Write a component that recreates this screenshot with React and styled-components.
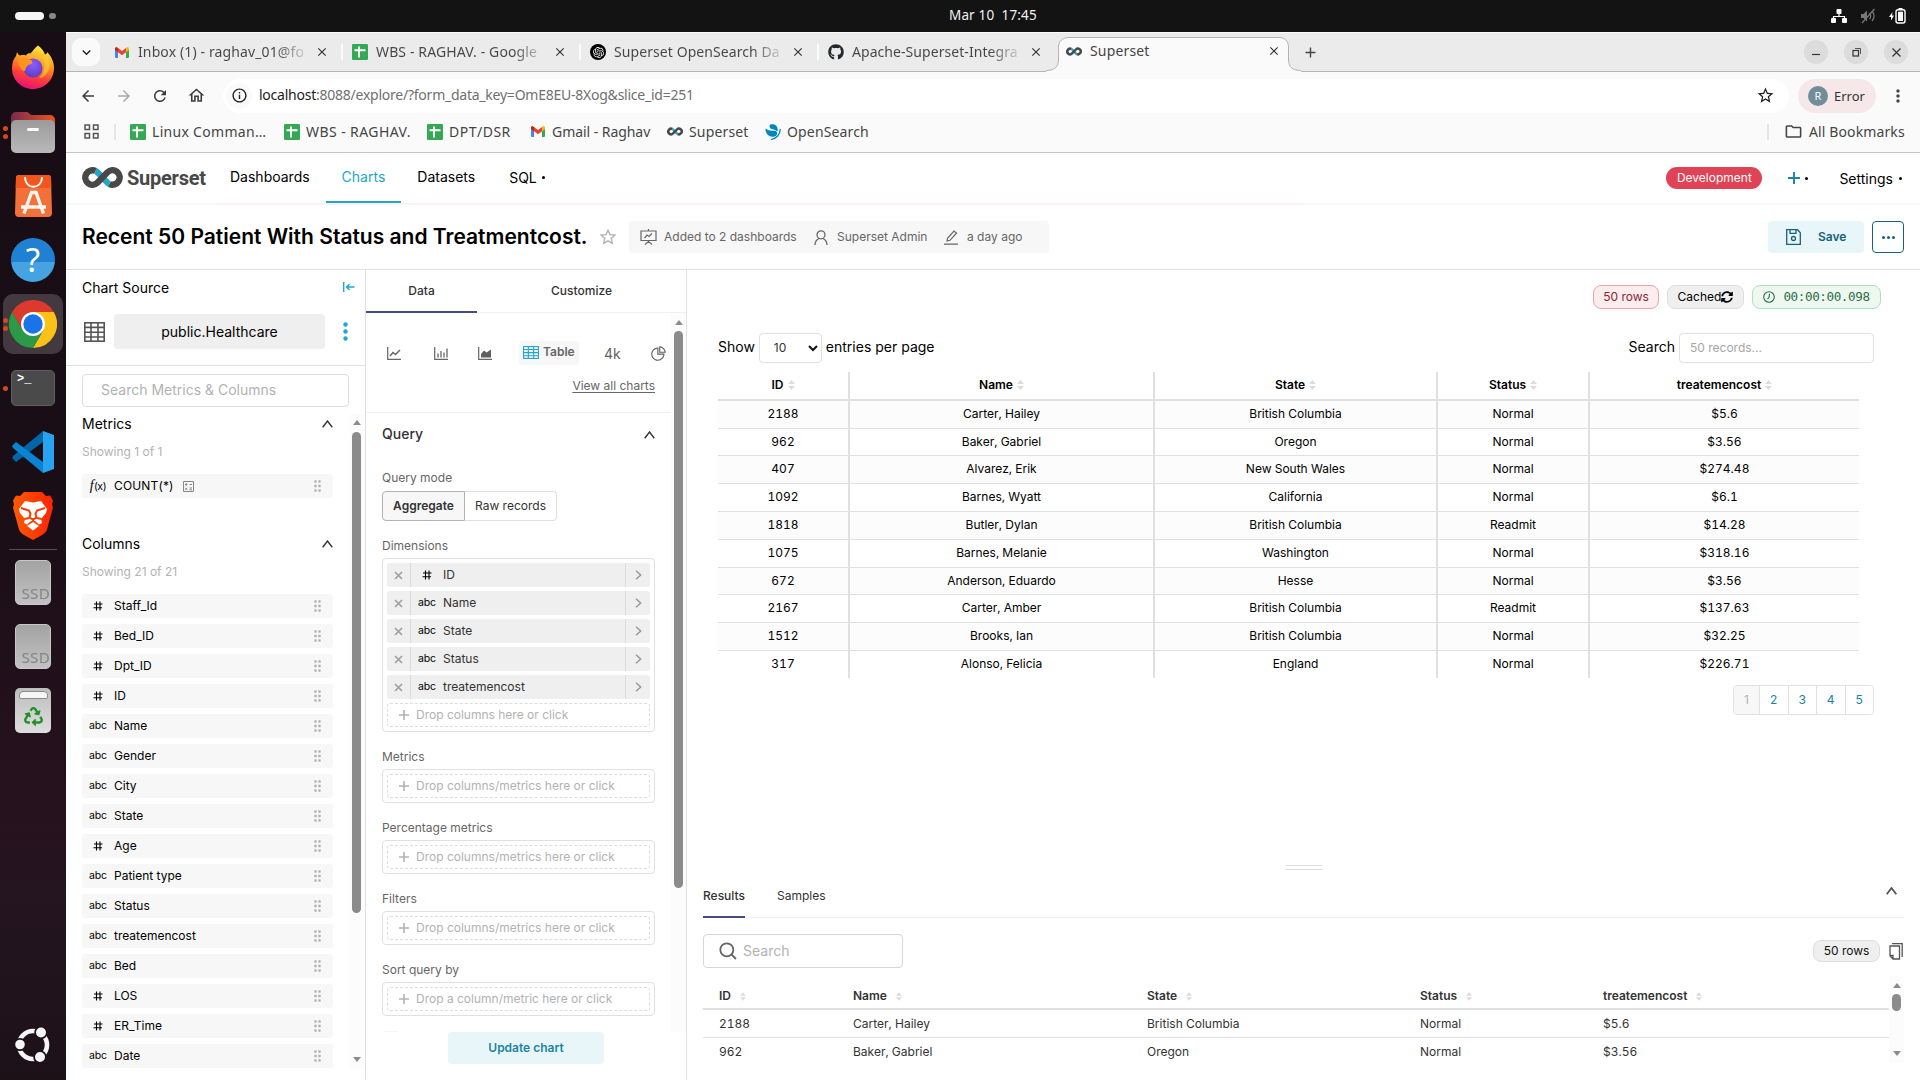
import React from 'react';
import styled, { createGlobalStyle, css } from 'styled-components';
import { AiOutlinePieChart } from 'react-icons/ai';
import { FaGithub, FaRecycle, FaSyncAlt } from 'react-icons/fa';
import { SiOpenai } from 'react-icons/si';
import {
  MdArrowBack, MdArrowForward, MdRefresh, MdOutlineHome, MdInfoOutline, MdStarOutline,
  MdMoreVert, MdOutlineFolder, MdClose, MdAdd, MdKeyboardArrowDown,
} from 'react-icons/md';

const inter = `Inter, 'Liberation Sans', sans-serif`;
const ubuntu = `'Noto Sans', 'Open Sans', sans-serif`;

const GlobalStyle = createGlobalStyle`
  * { box-sizing: border-box; }
  body { margin: 0; overflow: hidden; background: #fff; }
  svg { display: block; flex: none; }
`;

/* ---------- desktop shell ---------- */

const Desktop = styled.div`
  width: 1920px; height: 1080px; overflow: hidden;
  display: flex; flex-direction: column;
  font: 400 12px/16px ${inter}; color: #000;
`;
const TopBar = styled.header`
  height: 32px; background: #131313; color: #f2f2f2; flex: none;
  display: grid; grid-template-columns: 945px auto 1fr; align-items: center;
  padding: 0 14px 0 0; font: 400 14px/20px ${ubuntu};
`;
const Clock = styled.div`
  padding: 0 0 2px 4px; white-space: pre; font-size: 13.5px; letter-spacing: 0.15px;
`;
const Workspaces = styled.div`
  display: flex; align-items: center; gap: 5px; padding-left: 15px;
`;
const WorkspaceDot = styled.i`
  width: ${p => (p.$active ? 29 : 7)}px; height: ${p => (p.$active ? 8 : 6)}px;
  border-radius: 4px; background: ${p => (p.$active ? '#f5f5f5' : '#888')};
`;
const Tray = styled.div`
  display: flex; justify-content: flex-end; align-items: center; gap: 13px; height: 32px;
`;
const Body = styled.div`
  flex: 1; display: flex; min-height: 0;
`;
const Dock = styled.nav`
  width: 66px; flex: none; padding: 4px 0 3px; display: flex; flex-direction: column;
  background: linear-gradient(180deg, #180d14 0%, #1a0e16 45%, #27121f 76%, #241520 82%, #1d1118 100%);
`;
const DockSlot = styled.div`
  height: 64px; display: flex; align-items: center; justify-content: center; position: relative;
  padding-bottom: ${p => p.$lift || 0}px;
`;
const DockFocus = styled.div`
  width: 60px; height: 60px; border-radius: 10px; background: #43393f;
  display: flex; align-items: center; justify-content: center;
`;
const RunDots = styled.div`
  position: absolute; left: 3px; top: 0; height: 64px;
  display: flex; flex-direction: column; justify-content: center; gap: 3px;
`;
const RunDot = styled.i`
  width: 5px; height: 5px; border-radius: 50%; background: #d5481b;
`;
const DockRule = styled.div`
  height: 1px; margin: 1px 9px 0; background: #564e54;
`;
const Terminal = styled.div`
  width: 44px; height: 36px; border-radius: 5px; background: #4a4a4a; border: 1px solid #606060;
  color: #fff; font: 700 12px/15px 'Liberation Mono', monospace; padding: 1px 5px;
`;
const Drive = styled.div`
  width: 36px; height: 45px; border-radius: 5px; border: 1px solid #c9c9c9;
  background: linear-gradient(#a3a3a3, #c2c2c2); color: #858585;
  font: 400 15px/18px ${ubuntu}; display: flex; align-items: flex-end; justify-content: flex-end;
  padding-bottom: 2px; letter-spacing: 0.4px;
`;
const Bin = styled.div`
  width: 36px; height: 45px; border-radius: 5px; background: linear-gradient(#bdbdbd, #dedede);
  display: flex; flex-direction: column; align-items: center; padding-top: 3px; gap: 8px;
  color: #25902a;
`;
const BinLid = styled.div`
  width: 29px; height: 8px; border-radius: 4px 4px 2px 2px; background: #f6f6f6; border: 1px solid #8c8c8c;
`;
const Spacer = styled.div`flex: 1;`;

/* ---------- browser chrome ---------- */

const Browser = styled.main`
  flex: 1; min-width: 0; display: flex; flex-direction: column; background: #fff;
`;
const TabStrip = styled.div`
  height: 40px; flex: none; display: flex; align-items: center;
  background: #ebebeb; border-top: 1px solid #fbfbfb; box-shadow: inset 0 -1px 0 #b4b4b4;
  padding: 0 12px 1px 6px; font: 400 14px/20px ${ubuntu}; color: #454545;
`;
const TabSearch = styled.div`
  width: 28px; height: 28px; border-radius: 9px; background: #fafafa; margin-right: 14px; color: #222;
  display: flex; align-items: center; justify-content: center;
`;
const Tab = styled.div`
  width: 238px; height: 20px; display: flex; align-items: center; flex: none;
  ${p => !p.$last && css`&::after { content: ''; width: 2px; height: 16px; margin-left: 12px; background: #fafafa; }`}
`;
const Favicon = styled.span`
  width: 16px; height: 16px; display: flex; align-items: center; justify-content: center; flex: none;
`;
const RoundIcon = styled(Favicon)`
  border-radius: 50%; background: #000; color: #fff;
`;
const TabTitle = styled.span`
  width: 168px; margin-left: 8px; white-space: nowrap; letter-spacing: ${p => p.$ls || 0}px;
  ${p => p.$fade && css`
    color: transparent; background: linear-gradient(90deg, #454545 138px, #45454522 168px); background-clip: text;
  `}
`;
const TabClose = styled.span`
  margin-left: 9px; width: 14px; color: #333;
`;
const ActiveTab = styled.div`
  width: 256px; height: 36px; align-self: flex-end; margin: 0 0 -1px -20px; position: relative; flex: none;
  display: flex; align-items: center; padding-left: 20px; padding-bottom: 6px;
`;
const ActiveShape = styled.svg`
  position: absolute; left: 0; top: 1px; overflow: visible;
`;
const ActiveContent = styled.div`
  position: relative; display: flex; align-items: center;
`;
const WinButton = styled.div`
  width: 24px; height: 24px; border-radius: 50%; background: #dcdcdc; margin-left: 16px; color: #333;
  display: flex; align-items: center; justify-content: center;
`;
const Toolbar = styled.div`
  height: 47px; flex: none; background: #fafafa; display: flex; align-items: center;
  padding: 0 12px 0 13px; color: #454545; font: 400 14px/20px ${ubuntu};
`;
const NavIcon = styled.span`
  width: 20px; margin-right: 16px; color: ${p => (p.$off ? '#a9a9a9' : '#3c3c3c')};
`;
const UrlBar = styled.div`
  height: 34px; width: 1566px; border-radius: 17px; background: #fff; flex: none;
  display: flex; align-items: center; padding: 0 14px 0 3px; color: #222;
`;
const SiteInfo = styled.span`
  width: 26px; height: 26px; border-radius: 50%; background: #fafafa; margin-right: 7px;
  display: flex; align-items: center; justify-content: center;
`;
const UrlText = styled.span`
  flex: 1; color: #707070; letter-spacing: -0.24px; padding-bottom: 2px; b { font-weight: 400; color: #1c1c1c; }
`;
const ProfilePill = styled.div`
  width: 78px; height: 34px; margin-left: 9px; border-radius: 17px; background: #f6e8e8; flex: none;
  display: flex; align-items: center; padding-left: 10px; gap: 6px; font-size: 13px; color: #333;
`;
const Avatar = styled.span`
  width: 20px; height: 20px; border-radius: 50%; background: #728c99; color: #fff;
  font-size: 11px; line-height: 20px; text-align: center;
`;
const Bookmarks = styled.div`
  height: 34px; flex: none; background: #fafafa; border-bottom: 1px solid #c6c6c6;
  display: flex; align-items: center; padding: 0 15px 8px 18px; color: #454545;
  font: 400 14px/20px ${ubuntu};
`;
const BarRule = styled.i`
  width: 2px; height: 16px; background: #e6e6e6; margin: 0 ${p => p.$r}px 0 ${p => p.$l}px;
`;
const Bookmark = styled.span`
  width: ${p => p.$w}px; display: flex; align-items: center; gap: 6px; white-space: nowrap; flex: none;
  letter-spacing: ${p => p.$ls || 0}px;
`;

/* ---------- application header ---------- */

const AppNav = styled.div`
  height: 52px; flex: none; display: flex; align-items: stretch; padding: 0 18px 0 16px;
  border-bottom: 2px solid #f7f7f7; font-size: 14px; background: #fff;
  border-image: linear-gradient(90deg, #f7f7f7 148px, #fdf3f5 148px, #fdf3f5 1236px, #f7f7f7 1236px) 0 0 2 0;
`;
const Brand = styled.div`
  display: flex; align-items: center; width: 132px; gap: 4px; color: #484848; padding-bottom: 1px;
  font: 700 20px/24px Roboto, sans-serif; letter-spacing: -0.25px;
`;
const NavItem = styled.div`
  padding: 0 16px 2px; display: flex; align-items: center; height: 50px;
  color: ${p => (p.$active ? '#20a7c9' : '#000')};
  box-shadow: ${p => (p.$active ? 'inset 0 -2px 0 #20a7c9' : 'none')};
`;
const NavMenu = styled.div`
  display: flex; align-items: center; height: 51px; margin-left: ${p => p.$ml}px; padding-bottom: ${p => p.$pb || 0}px;
`;
const NavDot = styled.i`
  width: 3px; height: 3px; border-radius: 50%; background: #000; margin-left: ${p => p.$ml}px;
`;
const EnvTag = styled.div`
  width: 96px; height: 22px; border-radius: 11px; background: #e04355; color: #fff; align-self: center;
  font-size: 12px; line-height: 22px; text-align: center;
`;
const TitleBar = styled.div`
  height: 65px; flex: none; display: flex; align-items: center; padding: 0 16px;
  border-bottom: 1px solid #e0e0e0;
`;
const Title = styled.h1`
  margin: 0; width: 518px; font: 600 21px/28px ${inter}; white-space: nowrap;
`;
const Meta = styled.div`
  width: 420px; height: 32px; margin-left: 13px; background: #f7f7f7; border-radius: 4px; color: #666;
  display: flex; align-items: center; padding-left: 11px;
`;
const MetaItem = styled.span`
  display: flex; align-items: center; gap: ${p => p.$gap}px; width: ${p => p.$w}px; white-space: nowrap; flex: none;
`;
const SaveButton = styled.div`
  width: 96px; height: 32px; border-radius: 4px; background: #e9f6f9; color: #156378; font-weight: 600;
  display: flex; align-items: center; padding-left: 18px; gap: 17px; margin-right: 8px;
`;
const MoreButton = styled.div`
  width: 32px; height: 32px; border-radius: 4px; border: 1px solid #156378;
  display: flex; align-items: center; justify-content: center; gap: 2px;
  i { width: 3px; height: 3px; border-radius: 50%; background: #156378; }
`;
const Explore = styled.div`
  flex: 1; display: flex; min-height: 0;
`;

/* ---------- datasource panel ---------- */

const SourcePanel = styled.section`
  width: 300px; flex: none; border-right: 1px solid #e0e0e0; display: flex; flex-direction: column;
`;
const SourceTop = styled.div`
  height: 96px; flex: none; border-bottom: 1px solid #e0e0e0; padding: 8px 10px 0 16px;
`;
const SourceHead = styled.div`
  height: 20px; display: flex; align-items: center; justify-content: space-between; font-size: 14px; line-height: 20px;
  svg { margin-bottom: 2px; }
`;
const SourceRow = styled.div`
  margin-top: 16px; height: 35px; display: flex; align-items: center; padding-left: 2px;
`;
const SourceName = styled.div`
  width: 211px; height: 35px; margin: 0 18px 0 9px; border-radius: 4px; background: #efefef;
  font-size: 14px; line-height: 35px; text-align: center;
`;
const MetricSearch = styled.div`
  width: 267px; height: 33px; margin: 8px 0 0 16px; border: 1px solid #dedede; border-radius: 4px; flex: none;
  font-size: 14px; line-height: 30px; padding-left: 18px; color: #b2b2b2;
`;
const SourceScroll = styled.div`
  flex: 1; display: flex; min-height: 0; padding: 7px 0 11px 16px; justify-content: space-between;
`;
const FieldList = styled.div`
  width: 251px; display: flex; flex-direction: column; gap: 6px; overflow: hidden;
`;
const GroupHead = styled.div`
  height: 20px; display: flex; justify-content: space-between; align-items: center; flex: none;
  font-size: 14px; margin-top: ${p => p.$mt || 0}px;
`;
const Showing = styled.div`
  height: 16px; margin: 4px 0 8px; color: #b2b2b2; flex: none;
`;
const Field = styled.div`
  height: 24px; flex: none; background: #f7f7f7; border-radius: 3px; display: flex; align-items: center;
  padding: 0 12px 0 6px;
`;
const TypeIcon = styled.span`
  width: ${p => p.$w || 20}px; display: flex; justify-content: center; margin-right: ${p => (p.$chip ? 0 : 6)}px;
  font-size: 10.5px; color: #000; letter-spacing: -0.15px;
`;
const Fx = styled.i`
  font: italic 400 14px/16px 'Liberation Serif', serif; letter-spacing: 0.2px;
  small { font: 400 10.5px ${inter}; letter-spacing: -0.4px; }
`;
const FieldName = styled.span`
  flex: ${p => (p.$tight ? 'none' : 1)}; margin-right: 9px; white-space: nowrap; letter-spacing: ${p => (p.$tight ? 0.15 : 0)}px;
`;
const Track = styled.div`
  width: 15px; background: #fcfcfc; flex: none; display: flex; flex-direction: column; align-items: center;
  padding: ${p => p.$pad};
`;
const Arrow = styled.i`
  border: 4.5px solid transparent; border-top-width: 0; border-bottom: 5px solid #8b8b8b;
  ${p => p.$down && css`transform: rotate(180deg);`}
`;
const Thumb = styled.div`
  width: 9px; border-radius: 5px; background: #8b8b8b; height: ${p => p.$h}px; margin-top: ${p => p.$mt}px; flex: none;
`;

/* ---------- control panel ---------- */

const ControlPanel = styled.section`
  width: 321px; flex: none; border-right: 1px solid #e0e0e0; display: flex; flex-direction: column;
`;
const Tabs = styled.div`
  display: flex; height: 43px; flex: none; border-bottom: 1px solid #f0f0f0;
`;
const ControlTab = styled.div`
  width: ${p => p.$w}px; height: 43px; line-height: 41px; text-align: center; color: #333; font-weight: 500;
  border-bottom: 2px solid ${p => (p.$active ? '#444e7c' : 'transparent')};
`;
const ControlScroll = styled.div`
  flex: 1; display: flex; min-height: 0;
`;
const Controls = styled.div`
  width: 305px; display: flex; flex-direction: column;
`;
const VizRow = styled.div`
  height: 79px; margin-top: 20px; flex: none; padding-top: 8px;
`;
const VizTypes = styled.div`
  display: flex; align-items: center; height: 24px; color: #5f5f5f; padding-left: 21px;
`;
const Viz = styled.span`
  width: ${p => p.$w}px; font-size: 14px; padding-top: ${p => (p.$text ? 1 : 0)}px;
`;
const VizPill = styled.span`
  width: 60px; height: 24px; background: #f7f7f7; border-radius: 4px; font-weight: 600; color: #666; margin-right: 25px;
  display: flex; align-items: center; gap: 4px; padding-left: 4px; padding-bottom: 2px;
`;
const ViewAll = styled.div`
  margin: 13px 16px 0 auto; width: 83px; text-align: right; color: #666; text-decoration: underline; white-space: nowrap; text-underline-offset: 2px;
`;
const Section = styled.div`
  border-top: 1px solid #f0f0f0; padding: 10px 15px 0 16px; flex: none;
`;
const SectionHead = styled.div`
  height: 22px; display: flex; align-items: center; justify-content: space-between; font-size: 14px; font-weight: 500; color: #333;
  padding-right: 1px;
  svg { margin-top: 2px; }
`;
const Label = styled.div`
  color: #666; height: 16px; margin: ${p => p.$mt}px 0 4px;
`;
const ModeButtons = styled.div`display: flex; height: 30px; margin-top: 5px;`;
const Mode = styled.div`
  width: ${p => (p.$on ? 83 : 92)}px; line-height: 27px; text-align: center; border: 1px solid ${p => (p.$on ? '#b2b2b2' : '#e0e0e0')};
  border-radius: ${p => (p.$on ? '4px 0 0 4px' : '0 4px 4px 0')}; color: #333;
  background: ${p => (p.$on ? '#f7f7f7' : '#fff')}; font-weight: ${p => (p.$on ? 600 : 400)};
  border-left-width: ${p => (p.$on ? 1 : 0)}px;
`;
const DropBox = styled.div`
  width: 273px; border: 1px solid #e0e0e0; border-radius: 4px; padding: 4px; display: flex; flex-direction: column; gap: 4px;
`;
const Chip = styled.div`
  height: 24px; background: #efefef; border-radius: 3px; display: flex; align-items: center; color: #333;
`;
const ChipEdge = styled.span`
  width: ${p => (p.$right ? 25 : 24)}px; height: 24px; display: flex; align-items: center; justify-content: center; color: #a8a8a8;
  border-${p => (p.$right ? 'left' : 'right')}: 1px solid #dcdcdc;
`;
const DropHint = styled.div`
  height: 24px; border: 1px dashed #dcdcdc; border-radius: 3px; color: #b2b2b2; display: flex; align-items: center;
  padding: 0 0 1px 11px; gap: 7px;
`;
const UpdateFooter = styled.div`
  height: 48px; flex: none; display: flex; align-items: flex-start; padding-left: 82px;
`;
const UpdateButton = styled.div`
  width: 156px; height: 32px; border-radius: 4px; background: #e9f6f9; color: #1a85a0; font-weight: 600;
  line-height: 31px; text-align: center;
`;
const FadedRow = styled.div`
  margin: 15px 0 0 16px; display: flex; height: 5px; overflow: hidden;
  i { width: 17px; height: 17px; border: 1px solid #f5f5f5; border-radius: 2px; }
`;

/* ---------- chart panel ---------- */

const ChartPanel = styled.section`
  flex: 1; min-width: 0; display: flex; flex-direction: column;
`;
const Pills = styled.div`
  display: flex; justify-content: flex-end; gap: 8px; padding: 15px 39px 0 0;
`;
const Pill = styled.div`
  width: ${p => p.$w}px; height: ${p => p.$h || 24}px; border: 1px solid ${p => p.$bd}; background: ${p => p.$bg}; color: ${p => p.$fg};
  border-radius: 8px; display: flex; align-items: center; justify-content: center; gap: ${p => p.$gap || 0}px; white-space: nowrap;
`;
const Mono = styled.span`font: 400 12.6px/16px 'DejaVu Sans Mono', monospace; letter-spacing: -0.4px;`;
const Filters = styled.div`
  display: flex; align-items: center; height: 30px; margin: 24px 46px 9px 31px; font-size: 14px; flex: none;
`;
const FilterText = styled.span`padding-bottom: 2px;`;
const PageSize = styled.div`
  width: 63px; height: 30px; border: 1px solid #e0e0e0; border-radius: 4px; margin: 0 4px 0 4px; padding: 0 3px 0 14px;
  display: flex; align-items: center; justify-content: space-between; font-size: 12px; color: #333;
`;
const RecordSearch = styled.div`
  width: 195px; height: 30px; border: 1px solid #e0e0e0; border-radius: 4px; margin-left: 4px; padding-left: 10px;
  font-size: 12px; line-height: 28px; color: #a6a6a6;
`;
const DataTable = styled.div`
  width: 1141px; margin-left: 31px; flex: none; font-variant-numeric: tabular-nums;
`;
const columns = '132px 305px 283px 152px 269px';
const HeadRow = styled.div`
  display: grid; grid-template-columns: ${columns}; height: 29px; border-bottom: 2px solid #e0e0e0; font-weight: 600;
`;
const DataRow = styled.div`
  display: grid; grid-template-columns: ${columns}; height: ${p => p.$h}px;
  background: ${p => (p.$odd ? '#fcfcfc' : '#fff')};
`;
const Cell = styled.div`
  display: flex; align-items: center; justify-content: center; gap: 4px; padding-bottom: 1px;
  &:not(:last-child) { border-right: 2px solid #e0e0e0; }
  ${p => !p.$head && !p.$end && css`border-bottom: 1px solid #e0e0e0;`}
`;
const Pager = styled.div`
  display: flex; width: 141px; height: 30px; margin: 7px 46px 0 auto; border: 1px solid #e0e0e0; border-radius: 4px; overflow: hidden; flex: none;
`;
const Page = styled.span`
  flex: ${p => (p.$on ? '0 0 25px' : 1)}; text-align: center; line-height: 28px; color: ${p => (p.$on ? '#b2b2b2' : '#1a85a0')};
  background: ${p => (p.$on ? '#f7f7f7' : '#fff')}; & + & { border-left: 1px solid #e0e0e0; }
`;
const Gutter = styled.div`
  width: 36px; height: 5px; margin: 150px 0 0 599px; border-top: 1px solid #dcdcdc; border-bottom: 1px solid #dcdcdc; flex: none;
`;
const ResultTabs = styled.div`
  display: flex; gap: 32px; margin: 12px 16px 0; height: 36px; border-bottom: 1px solid #f0f0f0; flex: none; color: #333;
`;
const ResultTab = styled.div`
  width: ${p => p.$w}px; height: 36px; line-height: 28px; white-space: nowrap; font-weight: ${p => (p.$on ? 500 : 400)};
  border-bottom: 2px solid ${p => (p.$on ? '#444e7c' : 'transparent')};
`;
const TabsCaret = styled.div`margin: 0 7px 0 auto; padding-top: 5px; color: #555;`;
const ResultBar = styled.div`
  display: flex; align-items: center; margin: 16px 16px 8px; height: 34px; flex: none;
`;
const ResultSearch = styled.div`
  width: 200px; height: 34px; border: 1px solid #d6d6de; border-radius: 4px; padding-left: 15px; display: flex; align-items: center; gap: 6px;
  color: #b2b2b2; font-size: 14px;
`;
const CopyIcon = styled.svg`margin: 0 1px 0 9px;`;
const ResultGrid = styled.div`
  display: flex; margin: 0 16px; height: 87px; flex: none;
`;
const ResultRows = styled.div`flex: 1; color: #333; overflow: hidden; font-variant-numeric: tabular-nums;`;
const ResultRow = styled.div`
  display: grid; grid-template-columns: 134px 294px 273px 183px 1fr; align-items: center; padding-left: 16px;
  height: ${p => (p.$head ? 34 : 28)}px; border-bottom: ${p => (p.$head ? 2 : 1)}px solid ${p => (p.$last ? 'transparent' : '#e0e0e0')};
  padding-top: ${p => (p.$head ? 8 : 1)}px;
  font-weight: ${p => (p.$head ? 600 : 400)};
  span { display: flex; align-items: center; gap: 9px; }
`;

/* ---------- drawings ---------- */

const Loop = ({ w = 16, h = 8 }) => (
  <svg width={w} height={h} viewBox="0 0 41 21" fill="none" strokeWidth="6.400">
    <path d="M13.500 3.950C17 5.200 24 15.800 27.500 17.050" stroke="#20a7c9" />
    <path d="M13.500 3.950A7.200 7.200 0 1 0 15.600 15.600L25.400 5.400A7.200 7.200 0 1 1 27.500 17.050" stroke="#484848" />
  </svg>
);
const Gmail = () => (
  <svg width="14" height="11" viewBox="0 0 14 11">
    <path d="M0 1.500V10a1 1 0 0 0 1 1h2V4z" fill="#4285f4" />
    <path d="M14 1.500V10a1 1 0 0 1-1 1h-2V4z" fill="#34a853" />
    <path d="M3 1v4.300L0 3V1.300A1.300 1.300 0 0 1 2.200.400z" fill="#c5221f" />
    <path d="M3 1l4 3 4-3v4.300L7 8.300 3 5.300z" fill="#ea4335" />
    <path d="M11 1v4.300L14 3V1.300a1.300 1.300 0 0 0-2.200-.9z" fill="#fbbc04" />
  </svg>
);
const Sheet = () => (
  <svg width="16" height="16" viewBox="0 0 16 16">
    <rect width="16" height="16" rx="1.200" fill="#34a853" />
    <path d="M7 2.500v11M2.500 6.200h11" stroke="#fff" strokeWidth="2" />
  </svg>
);
const OpenSearch = () => (
  <svg width="16" height="16" viewBox="0 0 16 16">
    <path d="M15.200 5.500A10 10 0 0 1 6.500 15.300" stroke="#0087bd" strokeWidth="1.300" fill="none" strokeLinecap="round" />
    <path d="M.8 4.200C-.2 8 2.500 12.500 7.500 12.800c3.800.2 5.300-2.300 4.300-4.600C10.700 5.800 8 7 5.300 6.400 3.500 6 1.800 5.600.8 4.200z" fill="#0087bd" />
    <path d="M5.200.5C8-.5 12.200.8 12.700 4.700c.2 2-.7 3.100-1.500 2.100C9.900 5.100 8 5.600 6.500 4.900 4.500 3.900 4 1.300 5.200.5z" fill="#0087bd" />
  </svg>
);
const GridIcon = ({ w, h, color, sw = 1.5 }) => (
  <svg width={w} height={h} viewBox={`0 0 ${w} ${h}`} fill="none" stroke={color} strokeWidth={sw}>
    <rect x={sw / 2} y={sw / 2} width={w - sw} height={h - sw} />
    <path d={`M0 ${h * 0.27}H${w}M0 ${h * 0.51}H${w}M0 ${h * 0.75}H${w}M${w / 3} 0V${h}M${w * 2 / 3} 0V${h}`} strokeWidth={sw} />
  </svg>
);
const Axes = ({ children }) => (
  <svg width="14" height="13" viewBox="0 0 14 13" fill="none" stroke="#666" strokeWidth="1.200">
    <path d="M.7 0v12.300H14" />{children}
  </svg>
);
const Caret = ({ w = 11, h = 8, color = '#333', sw = 1.4 }) => (
  <svg width={w} height={h} viewBox="0 0 11 8" fill="none" stroke={color} strokeWidth={sw}><path d="M.7 7.200L5.500 1l4.800 6.200" /></svg>
);
const Grip = () => (
  <svg width="7" height="12" viewBox="0 0 7 12" fill="#b2b2b2">
    {[1.5, 6, 10.500].map(y => [1.5, 5.500].map(x => <rect key={`${x}${y}`} x={x - 1.200} y={y - 1.200} width="2.400" height="2.400" rx=".6" />))}
  </svg>
);
const Hash = () => (
  <svg width="10" height="10" viewBox="0 0 10 10" stroke="#000" strokeWidth="1.100"><path d="M3.500.5v9M7 .5v9M1 3h8.500M.5 6.700H9" /></svg>
);
const Sort = ({ w = 7, h = 10 }) => (
  <svg width={w} height={h} viewBox="0 0 7 10" fill="#dcdcdc"><path d="M3.500 0L7 4H0zM3.500 10L0 6h7z" /></svg>
);
const Plus = ({ size = 10, color = '#b2b2b2' }) => (
  <svg width={size} height={size} viewBox="0 0 10 10" stroke={color} strokeWidth="1.600"><path d="M5 0v10M0 5h10" /></svg>
);

const Firefox = () => (
  <svg width="44" height="44" viewBox="0 0 44 44">
    <defs>
      <linearGradient id="fa" x1=".7" y1="0" x2=".4" y2="1"><stop offset="0" stopColor="#fff04a" /><stop offset=".4" stopColor="#ff9a1f" /><stop offset=".7" stopColor="#ff4038" /><stop offset="1" stopColor="#e6107c" /></linearGradient>
      <radialGradient id="fb" cx=".5" cy=".3" r=".7"><stop offset="0" stopColor="#9059ff" /><stop offset="1" stopColor="#5a3fc4" /></radialGradient>
    </defs>
    <path d="M27 .5c4 3 6 6 7 9 2-.5 2-1.500 2-2.500 4 4 7 9.500 7 16C43 35 33.500 44 22 44S1 35 1 23c0-5 1.500-9 4-12l1-4c1 2 1.500 3 3 3.500 2-.5 4-.6 6 0 2-3 4.500-2 4.500-2C22 6 24 2.500 27 .5z" fill="url(#fa)" />
    <circle cx="22" cy="23" r="9.500" fill="url(#fb)" />
    <path d="M7 15c3-2.500 7-2.500 11-1 3 1 4 3 3 4.500-1 1-4 1-5 2.500-2 2.500-1 5-3 5S6 19 7 15z" fill="#ff9320" />
    <path d="M35 10c4 5 5 13 1 18-2 3-5 5-8 5 6-6 7-14 3-20z" fill="#ffc93a" opacity=".7" />
  </svg>
);
const Files = () => (
  <svg width="44" height="41" viewBox="0 0 44 41">
    <defs><linearGradient id="fl"><stop offset="0" stopColor="#7b2a50" /><stop offset="1" stopColor="#e9541f" /></linearGradient>
      <linearGradient id="fg" x2="0" y2="1"><stop offset="0" stopColor="#9b9b9b" /><stop offset="1" stopColor="#b9b9b9" /></linearGradient></defs>
    <path d="M0 5a5 5 0 0 1 5-5h11c2 0 2.500 3 5 3h18a5 5 0 0 1 5 5v12H0z" fill="url(#fl)" />
    <rect y="8" width="44" height="33" rx="5" fill="url(#fg)" /><rect x="16" y="16" width="12" height="3" rx="1.500" fill="#fff" />
  </svg>
);
const Store = () => (
  <svg width="37" height="42" viewBox="0 0 37 42">
    <path d="M4 0h29a3 3 0 0 1 3 3l1 35a4 4 0 0 1-4 4H4a4 4 0 0 1-4-4L1 3a3 3 0 0 1 3-3z" fill="#f4703a" />
    <path d="M4 0h29a3 3 0 0 1 3 3l.3 10H.7L1 3a3 3 0 0 1 3-3z" fill="#f2561d" />
    <path d="M10 2c0 13 17 13 17 0" fill="none" stroke="#fff" strokeWidth="1.800" />
    <path d="M9 38.500l7.500-21h4.500l7.500 21M6 32h25" fill="none" stroke="#fff5ee" strokeWidth="3.400" />
  </svg>
);
const HelpBall = styled.div`
  width: 44px; height: 44px; border-radius: 50%; background: linear-gradient(#2080d2 0 54%, #46a3e2 55%); color: #fff;
  font: 400 33px/44px ${ubuntu}; text-align: center;
`;
const Chrome = () => (
  <svg width="48" height="48" viewBox="0 0 48 48">
    <path d="M24 24L3.200 12A24 24 0 0 1 44.800 12z" fill="#dd3a2e" />
    <path d="M24 12h20.800A24 24 0 0 1 24 48l10.400-18z" fill="#fbc116" />
    <path d="M13.600 30L3.200 12A24 24 0 0 0 24 48l10.400-18z" fill="#2a9a48" />
    <path d="M24 12H3.200L13.600 30z" fill="#dd3a2e" />
    <circle cx="24" cy="24" r="12" fill="#fff" /><circle cx="24" cy="24" r="9.700" fill="#1a73e8" />
  </svg>
);
const Code = () => (
  <svg width="42" height="42" viewBox="0 0 42 42">
    <path d="M0 27l4 4L31 11V0L1 25z" fill="#0065a9" />
    <path d="M0 15l4-4 27 20v11L1 17z" fill="#0a84d0" />
    <path d="M31 0l11 4v34l-11 4z" fill="#27a3f2" />
  </svg>
);
const Lion = () => (
  <svg width="42" height="48" viewBox="0 0 42 48">
    <defs><linearGradient id="br"><stop offset="0" stopColor="#ff5a00" /><stop offset="1" stopColor="#fb2400" /></linearGradient></defs>
    <path d="M12 0h18l4 4 4-.5 3 5-1 4 1 3-6 22c-1 3-3 4-5 5.500L21 48l-9-5C10 41.500 8 40.500 7 37.500L1 15.500l1-3-1-4 3-5 4 .5z" fill="url(#br)" />
    <path d="M13 9l8 1.500L29 9l6 8-1 4-5 6 1 4-3 1.500-4-3.500h-4l-4 3.500L12 31l1-4-5-6-1-4z" fill="#fff" />
    <path d="M9 16l8 2.500 1.500 3-1 4 3.500 2 3.500-2-1-4 1.500-3L33 16M12.500 27l4.500-1M29.500 27l-4.500-1M21 27.500V31" stroke="#fb3a00" strokeWidth="2" fill="none" />
    <path d="M15 34l6-4 6 4-6 4.500z" fill="#fff" />
  </svg>
);
const UbuntuMark = () => (
  <svg width="36" height="36" viewBox="0 0 36 36" fill="none">
    <circle cx="18" cy="18" r="14" stroke="#f5f5f5" strokeWidth="4.600" />
    <g fill="#f5f5f5" stroke="#1e1219" strokeWidth="1.800"><circle cx="5" cy="17.500" r="5.700" /><circle cx="26" cy="5.500" r="5.900" /><circle cx="25" cy="30" r="5.900" /></g>
  </svg>
);
const Network = () => (
  <svg width="16" height="14" viewBox="0 0 16 14" fill="#fff"><rect x="5.500" width="5" height="5" rx="1" /><rect y="9" width="5" height="5" rx="1" /><rect x="11" y="9" width="5" height="5" rx="1" /><path d="M8 4v4M2.500 10V7.500h11V10" stroke="#fff" fill="none" strokeWidth="1.200" /></svg>
);
const Muted = () => (
  <svg width="16" height="16" viewBox="0 0 16 16" fill="#777" stroke="#777"><path d="M1 6h2.500L7 2.500v11L3.500 10H1z" stroke="none" /><path d="M9.500 5c1.500 1.500 1.500 4.500 0 6M12 3c2.500 3 2.500 7 0 10" fill="none" strokeWidth="1.200" /><path d="M2 15L14.500 1" strokeWidth="1.300" /></svg>
);
const Battery = () => (
  <svg width="17" height="16" viewBox="0 0 17 16"><path d="M3.500 4L0 9h2v3.500L5 7.500H3z" fill="#fff" /><rect x="7" y="1.700" width="9" height="13.300" rx="2" fill="none" stroke="#fff" strokeWidth="1.400" /><rect x="9" y="3.700" width="5" height="9.300" fill="#fff" /><rect x="9.500" y="0" width="4" height="2" fill="#fff" /></svg>
);

/* ---------- data ---------- */

const rows = [
  ['2188', 'Carter, Hailey', 'British Columbia', 'Normal', '$5.6'],
  ['962', 'Baker, Gabriel', 'Oregon', 'Normal', '$3.56'],
  ['407', 'Alvarez, Erik', 'New South Wales', 'Normal', '$274.48'],
  ['1092', 'Barnes, Wyatt', 'California', 'Normal', '$6.1'],
  ['1818', 'Butler, Dylan', 'British Columbia', 'Readmit', '$14.28'],
  ['1075', 'Barnes, Melanie', 'Washington', 'Normal', '$318.16'],
  ['672', 'Anderson, Eduardo', 'Hesse', 'Normal', '$3.56'],
  ['2167', 'Carter, Amber', 'British Columbia', 'Readmit', '$137.63'],
  ['1512', 'Brooks, Ian', 'British Columbia', 'Normal', '$32.25'],
  ['317', 'Alonso, Felicia', 'England', 'Normal', '$226.71'],
];
const rowHeights = [28, 27, 28, 28, 28, 28, 27, 28, 28, 27];
const heads = ['ID', 'Name', 'State', 'Status', 'treatemencost'];
const fields = [
  ['#', 'Staff_Id'], ['#', 'Bed_ID'], ['#', 'Dpt_ID'], ['#', 'ID'], ['abc', 'Name'], ['abc', 'Gender'],
  ['abc', 'City'], ['abc', 'State'], ['#', 'Age'], ['abc', 'Patient type'], ['abc', 'Status'],
  ['abc', 'treatemencost'], ['abc', 'Bed'], ['#', 'LOS'], ['#', 'ER_Time'], ['abc', 'Date'],
];
const dims = [['#', 'ID'], ['abc', 'Name'], ['abc', 'State'], ['abc', 'Status'], ['abc', 'treatemencost']];
const drops = [
  ['Metrics', 'Drop columns/metrics here or click'],
  ['Percentage metrics', 'Drop columns/metrics here or click'],
  ['Filters', 'Drop columns/metrics here or click'],
  ['Sort query by', 'Drop a column/metric here or click'],
];
const tabs = [
  [<Favicon><Gmail /></Favicon>, 'Inbox (1) - raghav_01@fo', 0.12],
  [<Favicon><Sheet /></Favicon>, 'WBS - RAGHAV. - Google', 0.12],
  [<RoundIcon><SiOpenai size={11} /></RoundIcon>, 'Superset OpenSearch Da', 0.08],
  [<Favicon><FaGithub size={16} color="#24292f" /></Favicon>, 'Apache-Superset-Integra', 0.06],
];

const Kind = ({ t, w, chip }) => <TypeIcon $w={w} $chip={chip}>{t === '#' ? <Hash /> : t}</TypeIcon>;
const Dots = ({ n }) => <RunDots>{Array.from({ length: n }, (_, i) => <RunDot key={i} />)}</RunDots>;

const DockBar = () => (
  <Dock>
    <DockSlot $lift={2}><Firefox /></DockSlot>
    <DockSlot><Dots n={2} /><Files /></DockSlot>
    <DockSlot><Store /></DockSlot>
    <DockSlot><HelpBall>?</HelpBall></DockSlot>
    <DockSlot><DockFocus><Chrome /></DockFocus><Dots n={2} /></DockSlot>
    <DockSlot><Dots n={1} /><Terminal>&gt;_</Terminal></DockSlot>
    <DockSlot><Code /></DockSlot>
    <DockSlot><Lion /></DockSlot>
    <DockRule />
    <DockSlot><Drive>SSD</Drive></DockSlot>
    <DockSlot><Drive>SSD</Drive></DockSlot>
    <DockSlot><Bin><BinLid /><FaRecycle size={19} /></Bin></DockSlot>
    <Spacer />
    <DockSlot><UbuntuMark /></DockSlot>
  </Dock>
);

const BrowserChrome = () => (
  <>
    <TabStrip>
      <TabSearch><MdKeyboardArrowDown size={17} /></TabSearch>
      {tabs.map(([icon, name, ls], i) => (
        <Tab key={name} $last={i === 3}>
          {icon}<TabTitle $fade $ls={ls}>{name}</TabTitle><TabClose><MdClose size={14} /></TabClose>
        </Tab>
      ))}
      <ActiveTab>
        <ActiveShape width="256" height="34" viewBox="0 0 256 34">
          <path d="M0 34C8 34 13 31 13 23V10C13 4 17 .5 23 .5H233C239 .5 243 4 243 10V23C243 31 248 33.500 255 34V35H0z" fill="#fafafa" />
          <path d="M0 33.500C8 33.500 12.500 30 12.500 23V10C12.500 4 17 .5 23 .5H233C239 .5 242.500 4 242.500 10V23C242.500 30 247 33.500 255 33.500" fill="none" stroke="#b4b4b4" />
        </ActiveShape>
        <ActiveContent>
          <Favicon><Loop w={16} h={9} /></Favicon><TabTitle $ls={0.15}>Superset</TabTitle><TabClose><MdClose size={14} /></TabClose>
        </ActiveContent>
      </ActiveTab>
      <MdAdd size={17} />
      <Spacer />
      <WinButton><svg width="8" height="8" viewBox="0 0 8 8"><path d="M0 6.500h8" stroke="#333" strokeWidth="1.200" /></svg></WinButton>
      <WinButton><svg width="9" height="9" viewBox="0 0 9 9" fill="none" stroke="#333"><rect x="1" y="2.500" width="5.500" height="5.500" strokeWidth="1.200" /><path d="M3 .5h5.500V6" strokeWidth=".8" /></svg></WinButton>
      <WinButton><svg width="9" height="9" viewBox="0 0 9 9" stroke="#333" strokeWidth="1.200"><path d="M.5.500l8 8M8.500.500l-8 8" /></svg></WinButton>
    </TabStrip>
    <Toolbar>
      <NavIcon><MdArrowBack size={18} /></NavIcon>
      <NavIcon $off><MdArrowForward size={18} /></NavIcon>
      <NavIcon><MdRefresh size={18} /></NavIcon>
      <NavIcon><MdOutlineHome size={19} /></NavIcon>
      <UrlBar>
        <SiteInfo><MdInfoOutline size={17} /></SiteInfo>
        <UrlText><b>localhost</b>:8088/explore/?form_data_key=OmE8EU-8Xog&amp;slice_id=251</UrlText>
        <MdStarOutline size={19} />
      </UrlBar>
      <ProfilePill><Avatar>R</Avatar>Error</ProfilePill>
      <Spacer />
      <MdMoreVert size={20} />
    </Toolbar>
    <Bookmarks>
      <svg width="15" height="15" viewBox="0 0 15 15" fill="none" stroke="#555" strokeWidth="1.500"><path d="M1 1h4.500v4.500H1zM9.500 1H14v4.500H9.500zM1 9.500h4.500V14H1zM9.500 9.500H14V14H9.500z" /></svg>
      <BarRule $l={15} $r={14} />
      <Bookmark $w={154} $ls={0.3}><Sheet />Linux Comman…</Bookmark>
      <Bookmark $w={143} $ls={0.42}><Sheet />WBS - RAGHAV.</Bookmark>
      <Bookmark $w={103} $ls={0.5}><Sheet />DPT/DSR</Bookmark>
      <Bookmark $w={137} $ls={-0.05}><Favicon><Gmail /></Favicon>Gmail - Raghav</Bookmark>
      <Bookmark $w={98} $ls={0.15}><Loop w={16} h={9} />Superset</Bookmark>
      <Bookmark $w={110} $ls={0.15}><OpenSearch />OpenSearch</Bookmark>
      <Spacer />
      <BarRule $l={0} $r={15} />
      <Bookmark $w={121} $ls={0.12}><MdOutlineFolder size={19} />All Bookmarks</Bookmark>
    </Bookmarks>
  </>
);

const Header = () => (
  <>
    <AppNav>
      <Brand><Loop w={41} h={21} />Superset</Brand>
      <NavItem>Dashboards</NavItem>
      <NavItem $active>Charts</NavItem>
      <NavItem>Datasets</NavItem>
      <NavMenu $ml={18} $pb={2}>SQL<NavDot $ml={5} /></NavMenu>
      <Spacer />
      <EnvTag>Development</EnvTag>
      <NavMenu $ml={26} $pb={1}><Plus size={12} color="#1a85a0" /><NavDot $ml={5} /></NavMenu>
      <NavMenu $ml={31}>Settings<NavDot $ml={6} /></NavMenu>
    </AppNav>
    <TitleBar>
      <Title>Recent 50 Patient With Status and Treatmentcost.</Title>
      <svg width="16" height="16" viewBox="0 0 16 16" fill="none" stroke="#b2b2b2" strokeWidth="1.400"><path d="M8 1.300l2 4.400 4.800.500-3.500 3.300 1 4.800L8 11.900l-4.300 2.400 1-4.800L1.200 6.200 6 5.700z" /></svg>
      <Meta>
        <MetaItem $gap={7} $w={174}>
          <svg width="17" height="16" viewBox="0 0 17 16" fill="none" stroke="#666" strokeWidth="1.200"><path d="M1 2h15v9.500H1zM8.500 0v2M8.500 11.500V14M5 15.500l3.500-3 3.500 3M4.500 9l2.500-3 2 1.500L12 4.500" /></svg>
          Added to 2 dashboards
        </MetaItem>
        <MetaItem $gap={9} $w={130}>
          <svg width="14" height="15" viewBox="0 0 14 15" fill="none" stroke="#666" strokeWidth="1.300"><circle cx="7" cy="4.800" r="4" /><path d="M1 15c0-3 2-5.500 4-6.500M13 15c0-3-2-5.500-4-6.500" /></svg>
          Superset Admin
        </MetaItem>
        <MetaItem $gap={9} $w={90}>
          <svg width="14" height="15" viewBox="0 0 14 15" fill="none" stroke="#666" strokeWidth="1.200"><path d="M0 14.200h14M3 11l.6-3L10 1l2.500 2L6 10.300z" /></svg>
          a day ago
        </MetaItem>
      </Meta>
      <Spacer />
      <SaveButton>
        <svg width="15" height="16" viewBox="0 0 15 16" fill="none" stroke="#156378" strokeWidth="1.300"><path d="M.7.700h10.800l2.800 3v11.600H.7zM4 .7v3.600h6V.7" /><circle cx="7.500" cy="9.500" r="2" /></svg>
        Save
      </SaveButton>
      <MoreButton><i /><i /><i /></MoreButton>
    </TitleBar>
  </>
);

const Source = () => (
  <SourcePanel>
    <SourceTop>
      <SourceHead>Chart Source
        <svg width="12" height="10" viewBox="0 0 12 10" fill="none" stroke="#20a7c9" strokeWidth="1.400"><path d="M.7 0v10M11.500 5H3.500M6.500 2L3.500 5l3 3" /></svg>
      </SourceHead>
      <SourceRow>
        <GridIcon w={21} h={20} color="#555" sw={1.6} />
        <SourceName>public.Healthcare</SourceName>
        <svg width="5" height="19" viewBox="0 0 5 19" fill="#20a7c9"><circle cx="2.500" cy="2.500" r="2.200" /><circle cx="2.500" cy="9.500" r="2.200" /><circle cx="2.500" cy="16.500" r="2.200" /></svg>
      </SourceRow>
    </SourceTop>
    <MetricSearch>Search Metrics &amp; Columns</MetricSearch>
    <SourceScroll>
      <FieldList>
        <GroupHead>Metrics<Caret /></GroupHead>
        <Showing>Showing 1 of 1</Showing>
        <Field>
          <TypeIcon><Fx>f<small>(x)</small></Fx></TypeIcon>
          <FieldName $tight>COUNT(*)</FieldName>
          <svg width="11" height="11" viewBox="0 0 11 11" fill="none" stroke="#888"><path d="M.5.500h10v10H.5zM2 3.500h2.500M3.200 2.200v2.600M6.500 3.500H9M2.200 6.800l2 2M4.200 6.800l-2 2M6.500 7h2.500M6.500 8.800h2.500" /></svg>
          <Spacer /><Grip />
        </Field>
        <GroupHead $mt={30}>Columns<Caret /></GroupHead>
        <Showing>Showing 21 of 21</Showing>
        {fields.map(([t, n]) => <Field key={n}><Kind t={t} /><FieldName>{n}</FieldName><Grip /></Field>)}
      </FieldList>
      <Track $pad="6px 2px 7px 0"><Arrow /><Thumb $h={481} $mt={7} /><Spacer /><Arrow $down /></Track>
    </SourceScroll>
  </SourcePanel>
);

const ControlsPane = () => (
  <ControlPanel>
    <Tabs><ControlTab $w={111} $active>Data</ControlTab><ControlTab $w={209}>Customize</ControlTab></Tabs>
    <ControlScroll>
      <Controls>
        <VizRow>
          <VizTypes>
            <Viz $w={47}><Axes><path d="M3 9l3-3.500 2.500 2L13 3" strokeWidth="1.500" /></Axes></Viz>
            <Viz $w={44}><Axes><path d="M4 10.500V6.500M7 10.500V4M10 10.500V5.500M13 10.500V1.500" strokeWidth="1.300" /></Axes></Viz>
            <Viz $w={41}><Axes><path d="M3 10.500V7l3-3.500 2.500 2L13 2.500v8z" fill="#5f5f5f" stroke="none" /></Axes></Viz>
            <VizPill><GridIcon w={16} h={13} color="#20a7c9" sw={1.1} />Table</VizPill>
            <Viz $w={46} $text>4k</Viz>
            <Viz $w={16}><AiOutlinePieChart size={17} /></Viz>
          </VizTypes>
          <ViewAll>View all charts</ViewAll>
        </VizRow>
        <Section>
          <SectionHead>Query<Caret /></SectionHead>
          <Label $mt={25}>Query mode</Label>
          <ModeButtons><Mode $on>Aggregate</Mode><Mode>Raw records</Mode></ModeButtons>
          <Label $mt={17}>Dimensions</Label>
          <DropBox>
            {dims.map(([t, n]) => (
              <Chip key={n}>
                <ChipEdge><svg width="9" height="9" viewBox="0 0 9 9" stroke="#a0a0a0" strokeWidth="1.700"><path d="M1 1l7 7M8 1L1 8" /></svg></ChipEdge>
                <Kind t={t} w={32} chip />
                <FieldName>{n}</FieldName>
                <ChipEdge $right><svg width="7" height="10" viewBox="0 0 7 10" fill="none" stroke="#999" strokeWidth="1.500"><path d="M1 .7L5.700 5 1 9.300" /></svg></ChipEdge>
              </Chip>
            ))}
            <DropHint><Plus />Drop columns here or click</DropHint>
          </DropBox>
          {drops.map(([l, h]) => (
            <React.Fragment key={l}>
              <Label $mt={17}>{l}</Label>
              <DropBox><DropHint><Plus />{h}</DropHint></DropBox>
            </React.Fragment>
          ))}
        </Section>
        <FadedRow><i /></FadedRow>
      </Controls>
      <Track $pad="7px 0 0"><Arrow /><Thumb $h={557} $mt={6} /></Track>
    </ControlScroll>
    <UpdateFooter><UpdateButton>Update chart</UpdateButton></UpdateFooter>
  </ControlPanel>
);

const Chart = () => (
  <ChartPanel>
    <Pills>
      <Pill $w={66} $bd="#f0a1aa" $bg="#fbecee" $fg="#8a2634">50 rows</Pill>
      <Pill $w={77} $bd="#dedede" $bg="#efefef" $fg="#000">Cached<FaSyncAlt size={12} /></Pill>
      <Pill $w={129} $bd="#acdfbf" $bg="#eef8f1" $fg="#2b6e47" $gap={8}>
        <svg width="12" height="12" viewBox="0 0 12 12" fill="none" stroke="#2b6e47" strokeWidth="1.100"><circle cx="6" cy="6" r="5.300" /><path d="M6.500 2.800L6 6.500 4.500 8" /></svg>
        <Mono>00:00:00.098</Mono>
      </Pill>
    </Pills>
    <Filters>
      <FilterText>Show</FilterText>
      <PageSize>10<svg width="10" height="7" viewBox="0 0 10 7" fill="none" stroke="#111" strokeWidth="2"><path d="M1 1l4 4 4-4" /></svg></PageSize>
      <FilterText>entries per page</FilterText>
      <Spacer />
      <FilterText>Search</FilterText><RecordSearch>50 records...</RecordSearch>
    </Filters>
    <DataTable>
      <HeadRow>{heads.map(h => <Cell key={h} $head>{h}<Sort /></Cell>)}</HeadRow>
      {rows.map((r, i) => (
        <DataRow key={r[0]} $odd={i % 2 === 0} $h={rowHeights[i]}>{r.map((c, j) => <Cell key={j} $end={i === 9}>{c}</Cell>)}</DataRow>
      ))}
    </DataTable>
    <Pager>{[1, 2, 3, 4, 5].map(n => <Page key={n} $on={n === 1}>{n}</Page>)}</Pager>
    <Gutter />
    <ResultTabs>
      <ResultTab $w={42} $on>Results</ResultTab><ResultTab $w={50}>Samples</ResultTab>
      <TabsCaret><Caret color="#555" sw={1.800} /></TabsCaret>
    </ResultTabs>
    <ResultBar>
      <ResultSearch>
        <svg width="18" height="18" viewBox="0 0 18 18" fill="none" stroke="#666" strokeWidth="1.800"><circle cx="7.800" cy="7.800" r="6.500" /><path d="M12.500 12.500L17 17" /></svg>
        Search
      </ResultSearch>
      <Spacer />
      <Pill $w={67} $h={22} $bd="#dedede" $bg="#efefef" $fg="#111">50 rows</Pill>
      <CopyIcon width="14" height="17" viewBox="0 0 14 17" fill="none" stroke="#555" strokeWidth="1.300"><path d="M3 .7h10.200V14M1 3h9.500v13H4L1 13zM1 12.500h3V16" /></CopyIcon>
    </ResultBar>
    <ResultGrid>
      <ResultRows>
        <ResultRow $head>{heads.map(h => <span key={h}>{h}<Sort w={6} h={9} /></span>)}</ResultRow>
        {rows.slice(0, 2).map((r, i) => <ResultRow key={r[0]} $last={i === 1}>{r.map((c, j) => <span key={j}>{c}</span>)}</ResultRow>)}
      </ResultRows>
      <Track $pad="7px 0 7px"><Arrow /><Thumb $h={17} $mt={6} /><Spacer /><Arrow $down /></Track>
    </ResultGrid>
  </ChartPanel>
);

export default function App() {
  return (
    <Desktop>
      <GlobalStyle />
      <TopBar>
        <Workspaces><WorkspaceDot $active /><WorkspaceDot /></Workspaces>
        <Clock>Mar 10  17:45</Clock>
        <Tray><Network /><Muted /><Battery /></Tray>
      </TopBar>
      <Body>
        <DockBar />
        <Browser>
          <BrowserChrome />
          <Header />
          <Explore><Source /><ControlsPane /><Chart /></Explore>
        </Browser>
      </Body>
    </Desktop>
  );
}
